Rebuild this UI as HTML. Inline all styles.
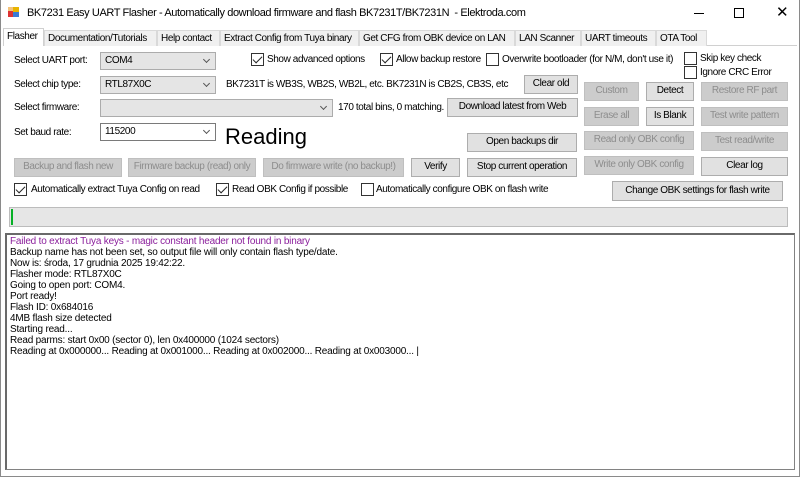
<!DOCTYPE html>
<html><head><meta charset="utf-8"><style>
*{box-sizing:border-box;margin:0;padding:0}
body{width:800px;height:477px;overflow:hidden;background:#fff;font-family:"Liberation Sans",sans-serif;font-size:10px;letter-spacing:-0.4px;color:#000;position:relative}
.a{position:absolute;white-space:nowrap}
.win{position:absolute;left:0;top:0;width:800px;height:477px;border:1px solid #8a8a8a;border-top:none}
.tab{position:absolute;top:30px;height:16px;background:#f0f0f0;border:1px solid #d9d9d9;border-bottom:none;padding:2px 3px;white-space:nowrap;line-height:12px;overflow:hidden}
.tab.sel{background:#fff;top:28px;height:18px;border-color:#d0d0d0}
.combo{position:absolute;height:18px;border:1px solid #acacac;background:#e5e5e5;padding:2px 4px;line-height:12px}
.combo.w{background:#fff;border-color:#7a7a7a}
.combo:after{content:"";position:absolute;right:6px;top:4px;width:4px;height:4px;border-right:1px solid #555;border-bottom:1px solid #555;transform:rotate(45deg)}
.btn{position:absolute;height:19px;border:1px solid #adadad;background:#e1e1e1;text-align:center;line-height:16px;white-space:nowrap;overflow:hidden}
.dis{background:#cccccc;border-color:#bfbfbf;color:#8d8d8d}
.cb{position:absolute;width:13px;height:13px;border:1px solid #333;background:#fff}
.cb.c:after{content:"";position:absolute;left:3px;top:0px;width:4px;height:8px;border-right:1px solid #222;border-bottom:1px solid #222;transform:rotate(45deg)}
.log{position:absolute;left:5px;top:233px;width:790px;height:237px;border:1px solid #828282;border-left:2px solid #6a6a6a;border-top:2px solid #6a6a6a;background:#fff;padding:1px 3px;line-height:11px;font-size:10px;letter-spacing:-0.2px}
</style></head><body>
<div class="win"></div>
<div class="a" style="left:8px;top:7px;width:11px;height:11px"><div style="position:absolute;left:0;top:4px;width:5px;height:6px;background:#d33"></div><div style="position:absolute;left:5px;top:0;width:6px;height:5px;background:#e8b400"></div><div style="position:absolute;left:5px;top:5px;width:6px;height:5px;background:#3a7bd5"></div><div style="position:absolute;left:0;top:0;width:5px;height:4px;background:#f3c27a"></div></div>
<div class="a" style="left:27px;top:7px;font-size:11px;letter-spacing:-0.4px">BK7231 Easy UART Flasher - Automatically download firmware and flash BK7231T/BK7231N&nbsp; - Elektroda.com</div>
<div class="a" style="left:694px;top:13px;width:10px;height:1px;background:#000"></div>
<div class="a" style="left:734px;top:8px;width:10px;height:10px;border:1px solid #000"></div>
<div class="a" style="left:776px;top:3px;font-size:15px">✕</div>
<div class="a" style="left:3px;top:45px;width:794px;height:1px;background:#d0d0d0"></div>
<div class="tab sel" style="left:3px;width:41px">Flasher</div>
<div class="tab" style="left:44px;width:113px">Documentation/Tutorials</div>
<div class="tab" style="left:157px;width:63px">Help contact</div>
<div class="tab" style="left:220px;width:139px">Extract Config from Tuya binary</div>
<div class="tab" style="left:359px;width:156px">Get CFG from OBK device on LAN</div>
<div class="tab" style="left:515px;width:66px">LAN Scanner</div>
<div class="tab" style="left:581px;width:75px">UART timeouts</div>
<div class="tab" style="left:656px;width:51px">OTA Tool</div>
<div class="a" style="left:14px;top:55px">Select UART port:</div>
<div class="combo" style="left:100px;top:52px;width:116px">COM4</div>
<div class="cb c" style="left:251px;top:53px"></div><div class="a" style="left:267px;top:54px">Show advanced options</div>
<div class="cb c" style="left:380px;top:53px"></div><div class="a" style="left:396px;top:54px">Allow backup restore</div>
<div class="cb" style="left:486px;top:53px"></div><div class="a" style="left:502px;top:54px">Overwrite bootloader (for N/M, don't use it)</div>
<div class="cb" style="left:684px;top:52px"></div><div class="a" style="left:700px;top:53px">Skip key check</div>
<div class="cb" style="left:684px;top:66px"></div><div class="a" style="left:700px;top:67px">Ignore CRC Error</div>
<div class="a" style="left:14px;top:79px">Select chip type:</div>
<div class="combo" style="left:100px;top:76px;width:116px">RTL87X0C</div>
<div class="a" style="left:226px;top:79px">BK7231T is WB3S, WB2S, WB2L, etc. BK7231N is CB2S, CB3S, etc</div>
<div class="btn" style="left:524px;top:75px;width:54px">Clear old</div>
<div class="btn dis" style="left:584px;top:82px;width:55px">Custom</div>
<div class="btn" style="left:646px;top:82px;width:48px">Detect</div>
<div class="btn dis" style="left:701px;top:82px;width:87px">Restore RF part</div>
<div class="a" style="left:14px;top:102px">Select firmware:</div>
<div class="combo" style="left:100px;top:99px;width:233px"></div>
<div class="a" style="left:338px;top:102px">170 total bins, 0 matching.</div>
<div class="btn" style="left:447px;top:98px;width:131px">Download latest from Web</div>
<div class="btn dis" style="left:584px;top:107px;width:55px">Erase all</div>
<div class="btn" style="left:646px;top:107px;width:48px">Is Blank</div>
<div class="btn dis" style="left:701px;top:107px;width:87px">Test write pattern</div>
<div class="a" style="left:14px;top:127px">Set baud rate:</div>
<div class="combo w" style="left:100px;top:123px;width:116px">115200</div>
<div class="a" style="left:225px;top:124px;font-size:22px;letter-spacing:0">Reading</div>
<div class="btn" style="left:467px;top:133px;width:110px">Open backups dir</div>
<div class="btn dis" style="left:584px;top:131px;width:110px">Read only OBK config</div>
<div class="btn dis" style="left:701px;top:132px;width:87px">Test read/write</div>
<div class="btn dis" style="left:14px;top:158px;width:108px">Backup and flash new</div>
<div class="btn dis" style="left:128px;top:158px;width:128px">Firmware backup (read) only</div>
<div class="btn dis" style="left:263px;top:158px;width:141px">Do firmware write (no backup!)</div>
<div class="btn" style="left:411px;top:158px;width:49px">Verify</div>
<div class="btn" style="left:467px;top:158px;width:110px">Stop current operation</div>
<div class="btn dis" style="left:584px;top:156px;width:110px">Write only OBK config</div>
<div class="btn" style="left:701px;top:157px;width:87px">Clear log</div>
<div class="cb c" style="left:14px;top:183px"></div><div class="a" style="left:31px;top:184px">Automatically extract Tuya Config on read</div>
<div class="cb c" style="left:216px;top:183px"></div><div class="a" style="left:232px;top:184px">Read OBK Config if possible</div>
<div class="cb" style="left:361px;top:183px"></div><div class="a" style="left:376px;top:184px">Automatically configure OBK on flash write</div>
<div class="btn" style="left:612px;top:181px;width:171px;height:20px;line-height:17px">Change OBK settings for flash write</div>
<div class="a" style="left:9px;top:207px;width:779px;height:20px;background:#e6e6e6;border:1px solid #bcbcbc"><div style="position:absolute;left:1px;top:1px;width:2px;height:16px;background:#06b025"></div></div>
<div class="log"><span style="color:#8b1f9c">Failed to extract Tuya keys - magic constant header not found in binary</span><br>Backup name has not been set, so output file will only contain flash type/date.<br>Now is: środa, 17 grudnia 2025 19:42:22.<br>Flasher mode: RTL87X0C<br>Going to open port: COM4.<br>Port ready!<br>Flash ID: 0x684016<br>4MB flash size detected<br>Starting read...<br>Read parms: start 0x00 (sector 0), len 0x400000 (1024 sectors)<br>Reading at 0x000000... Reading at 0x001000... Reading at 0x002000... Reading at 0x003000... |</div>
</body></html>
